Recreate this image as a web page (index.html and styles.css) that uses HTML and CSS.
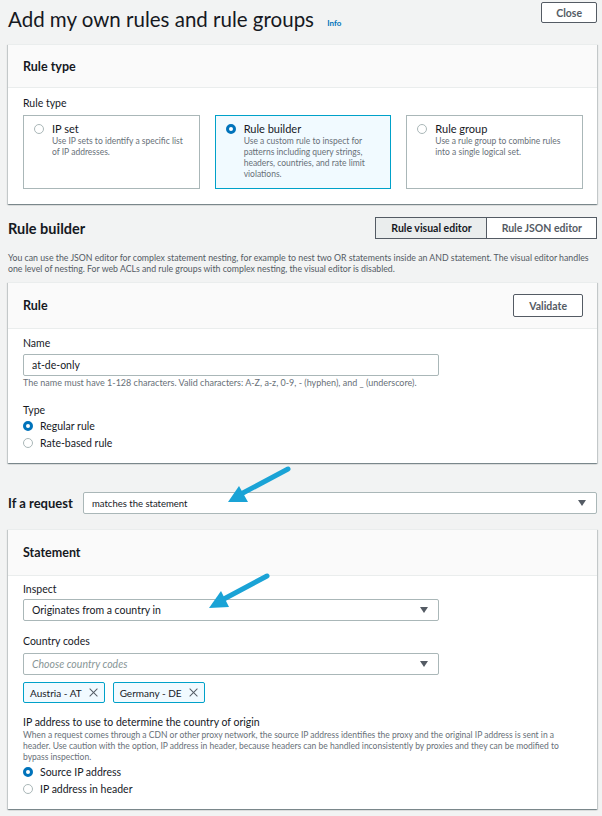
FILE: index.html
```html
<!DOCTYPE html>
<html lang="en">
<head>
    <meta charset="UTF-8">
    <meta name="viewport" content="width=device-width, initial-scale=1.0">
    <title>Add my own rules and rule groups</title>
    <link rel="stylesheet" href="styles.css">
</head>
<body>
    <div class="page-head">
        <h1>Add my own rules and rule groups <a class="info" href="#">Info</a></h1>
        <button class="btn" type="button">Close</button>
    </div>

    <div class="card">
        <div class="card-head">
            <h2>Rule type</h2>
        </div>
        <div class="card-body type-body">
            <div class="label">Rule type</div>
            <div class="tiles">
                <div class="tile">
                    <span class="radio"></span>
                    <div>
                        <div class="tile-title">IP set</div>
                        <div class="tile-desc">Use IP sets to identify a specific list of IP addresses.</div>
                    </div>
                </div>
                <div class="tile selected">
                    <span class="radio checked"></span>
                    <div>
                        <div class="tile-title">Rule builder</div>
                        <div class="tile-desc">Use a custom rule to inspect for patterns including query strings, headers, countries, and rate limit violations.</div>
                    </div>
                </div>
                <div class="tile">
                    <span class="radio"></span>
                    <div>
                        <div class="tile-title">Rule group</div>
                        <div class="tile-desc">Use a rule group to combine rules into a single logical set.</div>
                    </div>
                </div>
            </div>
        </div>
    </div>

    <div class="section-head">
        <h2>Rule builder</h2>
        <div class="segments">
            <span class="segment active">Rule visual editor</span>
            <span class="segment">Rule JSON editor</span>
        </div>
    </div>
    <p class="section-desc">You can use the JSON editor for complex statement nesting, for example to nest two OR statements inside an AND statement. The visual editor handles one level of nesting. For web ACLs and rule groups with complex nesting, the visual editor is disabled.</p>

    <div class="card">
        <div class="card-head tall">
            <h2>Rule</h2>
            <button class="btn validate" type="button">Validate</button>
        </div>
        <div class="card-body rule-body">
            <div class="label">Name</div>
            <div class="input">at-de-only</div>
            <div class="hint name-hint">The name must have 1-128 characters. Valid characters: A-Z, a-z, 0-9, - (hyphen), and _ (underscore).</div>
            <div class="label type-label">Type</div>
            <div class="option"><span class="radio checked"></span>Regular rule</div>
            <div class="option"><span class="radio"></span>Rate-based rule</div>
        </div>
    </div>

    <div class="request-row">
        <span class="request-label">If a request</span>
        <div class="select wide">matches the statement<span class="caret"></span></div>
    </div>

    <div class="card statement">
        <div class="card-head tall">
            <h2>Statement</h2>
        </div>
        <div class="card-body stmt-body">
            <div class="label">Inspect</div>
            <div class="select field">Originates from a country in<span class="caret"></span></div>

            <div class="label codes-label">Country codes</div>
            <div class="select field placeholder">Choose country codes<span class="caret"></span></div>
            <div class="tokens">
                <span class="token">Austria - AT <span class="x"></span></span>
                <span class="token">Germany - DE <span class="x"></span></span>
            </div>

            <div class="label origin-label">IP address to use to determine the country of origin</div>
            <div class="hint origin-desc">When a request comes through a CDN or other proxy network, the source IP address identifies the proxy and the original IP address is sent in a header. Use caution with the option, IP address in header, because headers can be handled inconsistently by proxies and they can be modified to bypass inspection.</div>
            <div class="option"><span class="radio checked"></span>Source IP address</div>
            <div class="option"><span class="radio"></span>IP address in header</div>
        </div>
    </div>

    <!-- annotation arrows drawn over the screenshot -->
    <svg class="arrows" width="602" height="816" viewBox="0 0 602 816">
        <line x1="288" y1="469" x2="241" y2="494" />
        <polygon points="228,502 248,502 239,486" />
        <line x1="267" y1="576" x2="222" y2="600" />
        <polygon points="209,608 229,607 221,591" />
    </svg>
</body>
</html>
```

FILE: styles.css
```css
body {
    margin: 0;
    padding: 0 5px 6px 8px;
    background: #f2f3f3;
    font-family: Lato, "Open Sans", sans-serif;
    color: #16191f;
    position: relative;
}

.page-head {
    display: flex;
    justify-content: space-between;
    align-items: flex-start;
    height: 44px;
}

.page-head h1 {
    margin: 6px 0 0;
    font-size: 20.5px;
    font-weight: 400;
    line-height: 26px;
}

.info {
    font-size: 8px;
    font-weight: 700;
    color: #0073bb;
    text-decoration: none;
    margin-left: 8px;
    vertical-align: 1px;
}

.btn {
    margin-top: 2px;
    height: 21px;
    padding: 0 14px;
    border: 1px solid #545b64;
    border-radius: 2px;
    background: #fff;
    color: #545b64;
    font-family: inherit;
    font-size: 10.5px;
    font-weight: 700;
}

.btn.validate {
    margin: 0;
    height: 23px;
    padding: 0 15px;
}

.card {
    background: #fff;
    border-top: 1px solid #eaeded;
    box-shadow: 0 1px 1px rgba(0, 28, 36, 0.3), 1px 1px 1px rgba(0, 28, 36, 0.15), -1px 1px 1px rgba(0, 28, 36, 0.15);
}

.card-head {
    height: 42px;
    display: flex;
    align-items: center;
    justify-content: space-between;
    padding: 0 14px 0 15px;
    background: #fafafa;
    border-bottom: 1px solid #eaeded;
}

.card-head.tall {
    height: 45px;
}

.card-head h2 {
    margin: 0;
    font-size: 12.5px;
    font-weight: 700;
}

.card-body {
    padding: 7px 14px 15px 15px;
}

.type-body {
    padding-top: 8px;
}

.label {
    font-size: 10.5px;
    line-height: 14px;
}

.type-body .label {
    margin-bottom: 5px;
}

.tiles {
    display: grid;
    grid-template-columns: repeat(3, 1fr);
    gap: 15px;
}

.tile {
    height: 74px;
    box-sizing: border-box;
    border: 1px solid #aab7b8;
    padding: 6px 10px;
    display: flex;
    gap: 8px;
}

.tile.selected {
    background: #f1faff;
    border-color: #00a1c9;
}

.tile .radio {
    margin-top: 2px;
}

.tile-title {
    font-size: 11px;
    line-height: 14px;
}

.tile-desc {
    font-size: 8.5px;
    line-height: 11px;
    color: #687078;
}

.radio {
    flex: none;
    width: 10px;
    height: 10px;
    box-sizing: border-box;
    border: 1px solid #aab7b8;
    border-radius: 50%;
    background: #fff;
}

.radio.checked {
    border: 3px solid #0073bb;
}

.section-head {
    display: flex;
    justify-content: space-between;
    align-items: center;
    margin-top: 13px;
}

.section-head h2 {
    margin: 0;
    font-size: 14.5px;
    font-weight: 700;
}

.segments {
    display: flex;
    border: 1px solid #545b64;
    height: 20px;
}

.segment {
    display: flex;
    align-items: center;
    padding: 0 14px 0 15px;
    font-size: 10.5px;
    font-weight: 700;
    color: #545b64;
    background: #fff;
}

.segment.active {
    background: #eaeded;
    color: #16191f;
    border-right: 1px solid #545b64;
}

.section-desc {
    margin: 13px 0 8px;
    font-size: 8.75px;
    line-height: 11px;
    color: #545b64;
}

.rule-body {
    padding-bottom: 12px;
}

.input {
    margin-top: 4px;
    width: 416px;
    height: 22px;
    box-sizing: border-box;
    border: 1px solid #aab7b8;
    border-radius: 2px;
    padding: 0 8px;
    display: flex;
    align-items: center;
    font-size: 10.5px;
}

.hint {
    margin-top: 1px;
    font-size: 8.5px;
    line-height: 11px;
    color: #687078;
}

.name-hint {
    font-size: 9px;
}

.type-label {
    margin-top: 15px;
}

.option {
    display: flex;
    align-items: center;
    gap: 7px;
    height: 17px;
    font-size: 10.5px;
}

.request-row {
    display: flex;
    align-items: center;
    margin-top: 29px;
}

.request-label {
    font-size: 13px;
    font-weight: 700;
    width: 75px;
}

.select {
    height: 22px;
    box-sizing: border-box;
    border: 1px solid #aab7b8;
    border-radius: 2px;
    background: #fff;
    padding: 0 10px 0 8px;
    display: flex;
    align-items: center;
    justify-content: space-between;
    font-size: 10.5px;
}

.select.wide {
    flex: 1;
    font-size: 9.5px;
}

.select.field {
    width: 416px;
    margin-top: 3px;
}

.select.placeholder {
    font-style: italic;
    color: #879596;
    margin-top: 5px;
}

.caret {
    width: 0;
    height: 0;
    border-left: 4px solid transparent;
    border-right: 4px solid transparent;
    border-top: 6px solid #545b64;
}

.statement {
    margin-top: 15px;
}

.stmt-body {
    padding: 6px 14px 12px 15px;
}

.codes-label {
    margin-top: 13px;
}

.tokens {
    display: flex;
    gap: 8px;
    margin-top: 7px;
}

.token {
    display: flex;
    align-items: center;
    gap: 7px;
    height: 21px;
    box-sizing: border-box;
    padding: 0 6px;
    border: 1px solid #00a1c9;
    border-radius: 2px;
    background: #f1faff;
    font-size: 10px;
}

.x {
    position: relative;
    width: 9px;
    height: 9px;
}

.x::before,
.x::after {
    content: "";
    position: absolute;
    left: 4px;
    top: -1px;
    width: 1.2px;
    height: 11px;
    background: #545b64;
    transform: rotate(45deg);
}

.x::after {
    transform: rotate(-45deg);
}

.origin-label {
    margin-top: 12px;
}

.origin-desc {
    margin-top: 1px;
}

.arrows {
    position: absolute;
    top: 0;
    left: 0;
    pointer-events: none;
}

.arrows line {
    stroke: #1aa3d6;
    stroke-width: 5;
    stroke-linecap: round;
}

.arrows polygon {
    fill: #1aa3d6;
}
```
